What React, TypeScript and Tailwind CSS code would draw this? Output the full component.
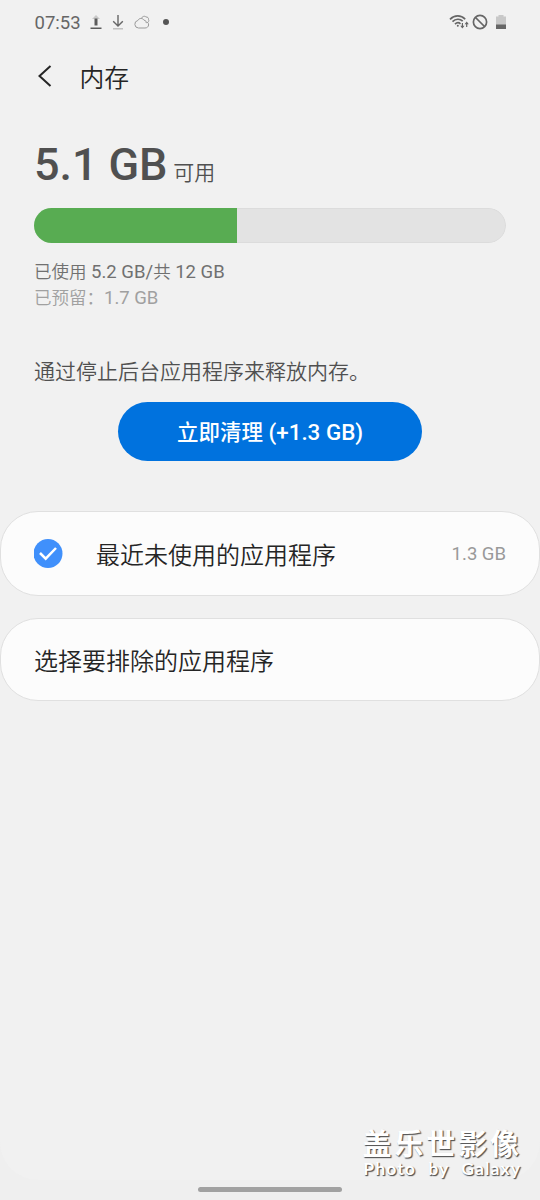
import type { ReactNode } from "react";

function StatusBar() {
  return (
    <div className="flex h-11 items-center justify-between pl-[34.500px] pr-[33px] text-[#666666]">
      <div className="flex items-center">
        <span className="w-[55.500px] pt-0.5 text-[18.500px] leading-none">07:53</span>
        <svg width="12" height="16" viewBox="0 0 12 16" className="shrink-0">
          <path d="M6 1 10 5H2Z" fill="#c9c9c9" />
          <path d="M4.500 4.500h3v7h-3z" fill="#5c5c5c" />
          <path d="M.5 13.500h11V15H.5z" fill="#5c5c5c" />
        </svg>
        <svg width="12" height="16" viewBox="0 0 12 16" fill="none" className="ml-[10px] shrink-0">
          <path d="M6 1v11M1.200 7.300 6 12.100l4.800-4.800" stroke="#666" strokeWidth="1.400" />
          <path d="M1 14.800h10" stroke="#b5b5b5" strokeWidth="1.200" />
        </svg>
        <svg width="16" height="14" viewBox="0 0 16 14" fill="none" stroke="#999" className="ml-[10px] shrink-0">
          <path d="M4.500 13a3.800 3.800 0 0 1-.7-7.500C5 3 8.500 2.600 10 5.200c1.800.2 2.500 1.400 2.200 2.800" />
          <path d="M4.500 13h6.500c2 0 3.400-1.200 3.600-3 .1-1.200-.3-2-.9-2.600M7.500 3.500C8 1.500 10.500.5 12 2c1.500-.3 2.800 1 2.500 2.400.8 1.500 0 3-1.800 3.400" />
        </svg>
        <span className="ml-[13px] size-1.5 rounded-full bg-[#555555]" />
      </div>
      <div className="flex items-center">
        <svg width="20" height="16" viewBox="0 0 20 16" fill="none" stroke="#666" strokeWidth="1.700" className="shrink-0">
          <path d="M1 5.300C5.500.7 12 .7 16.200 5.300M3.500 7.700c3.200-3.200 7.500-3.200 10.200-.5M6 10.200c1.600-1.600 4-1.700 5.500-.4" />
          <circle cx="8.800" cy="11.800" r="1" fill="#666" stroke="none" />
          <path d="M13.400 9v4.500M17.700 13V9" strokeWidth="1.200" />
          <path d="m11.300 11.700 2.100 2.800 2.100-2.800zM15.600 10.300l2.100-2.800 2.100 2.800z" fill="#666" stroke="none" />
        </svg>
        <svg width="16" height="16" viewBox="0 0 16 16" fill="none" stroke="#666" strokeWidth="1.700" className="ml-[3px] shrink-0">
          <circle cx="8" cy="8" r="6.600" />
          <path d="m3.500 3.500 9 9" />
        </svg>
        <svg width="12" height="16" viewBox="0 0 12 16" className="ml-[7px] shrink-0">
          <path d="M3.500 1h5v1.500H11V11H1V2.500h2.500z" fill="#c8c8c8" />
          <path d="M1 10.500h10V15H1z" fill="#666" />
        </svg>
      </div>
    </div>
  );
}

function Card({ className, children }: { className: string; children: ReactNode }) {
  return (
    <div className={`flex items-center rounded-[38px] border border-[#e0e0e0] bg-[#fcfcfc] px-[33px] text-[24px] text-[#252525] ${className}`}>
      {children}
    </div>
  );
}

function Latin({ children }: { children: ReactNode }) {
  return <span className="text-[18.500px] font-normal">{children}</span>;
}

export default function App() {
  return (
    <div className="flex h-[1200px] w-[540px] flex-col overflow-hidden bg-[#efefef] font-[Roboto,'Noto_Sans_CJK_SC',sans-serif]">
      <div className="flex h-[1180px] flex-col rounded-b-[38px] bg-[#f1f1f1]">
        <StatusBar />

        <header className="flex h-16 items-center pl-[37px] text-[#252525]">
          <svg width="16" height="24" viewBox="0 0 16 24" fill="none" stroke="currentColor" strokeWidth="2">
            <path d="M13.500 2 2.500 12l11 10" />
          </svg>
          <h1 className="ml-[26.500px] pt-[5px] text-[24.800px] font-[350] leading-9">内存</h1>
        </header>

        <section className="px-[34px] pt-[30px]">
          <div className="flex h-[54px] items-baseline text-[#505050]">
            <span className="text-[45px] font-medium leading-[54px] tracking-[-0.1px]">5.1 GB</span>
            <span className="ml-[6px] text-[21px] font-[350] leading-8">可用</span>
          </div>
          <div className="mt-4 flex h-[35px] overflow-hidden rounded-full">
            <div className="w-[203px] shrink-0 bg-[#58ac52]" />
            <div className="flex-1 rounded-r-full border border-l-0 border-[#dcdcdc] bg-[#e3e3e3]" />
          </div>
          <div className="mt-4 text-[17.500px] font-[350] leading-[26px]">
            <p className="h-[26px] text-[#707070]">
              已使用<Latin> 5.2 GB/</Latin>共<Latin> 12 GB</Latin>
            </p>
            <p className="h-[26px] text-[#a0a0a0]">
              已预留：<Latin>1.7 GB</Latin>
            </p>
          </div>
        </section>

        <section className="flex flex-col px-[34px] pt-[45px]">
          <p className="text-[21px] font-[350] leading-8 text-[#505050]">通过停止后台应用程序来释放内存。</p>
          <button className="mt-[14px] flex h-[59px] w-[304px] items-center justify-center self-center whitespace-pre rounded-full bg-[#0072de] pt-[3px] text-[21.500px] font-medium text-white">
            立即清理<span className="text-[22.400px]"> (+1.3 GB)</span>
          </button>
        </section>

        <section className="mt-[50px] flex flex-col gap-[22px]">
          <Card className="h-[85px]">
            <svg width="30" height="30" viewBox="0 0 30 30" fill="none" className="shrink-0">
              <circle cx="14" cy="14.500" r="14.500" fill="#4090fb" />
              <path d="m6 14 5.700 5.700L22 9" stroke="#fff" strokeWidth="2.500" />
            </svg>
            <span className="ml-8 pt-1 font-[350]">最近未使用的应用程序</span>
            <span className="ml-auto pt-0.5 text-[18.500px] text-[#999999]">1.3 GB</span>
          </Card>
          <Card className="h-[83px]">
            <span className="pt-1 font-[350]">选择要排除的应用程序</span>
          </Card>
        </section>

        <div className="mr-[20px] mt-auto flex flex-col items-end text-white [text-shadow:1px_1px_1px_#555,1px_1px_1px_#888]">
          <span className="-mr-[2px] text-[29px] font-bold leading-[28px] tracking-[2.900px]">盖乐世影像</span>
          <span className="-mr-px pb-px font-[Lato,sans-serif] text-[17.500px] font-bold leading-5 tracking-[1.100px] [word-spacing:7px]">Photo by Galaxy</span>
        </div>
      </div>
      <div className="mx-auto mt-[7px] h-[5px] w-[144px] rounded-full bg-[#a1a1a1]" />
    </div>
  );
}
